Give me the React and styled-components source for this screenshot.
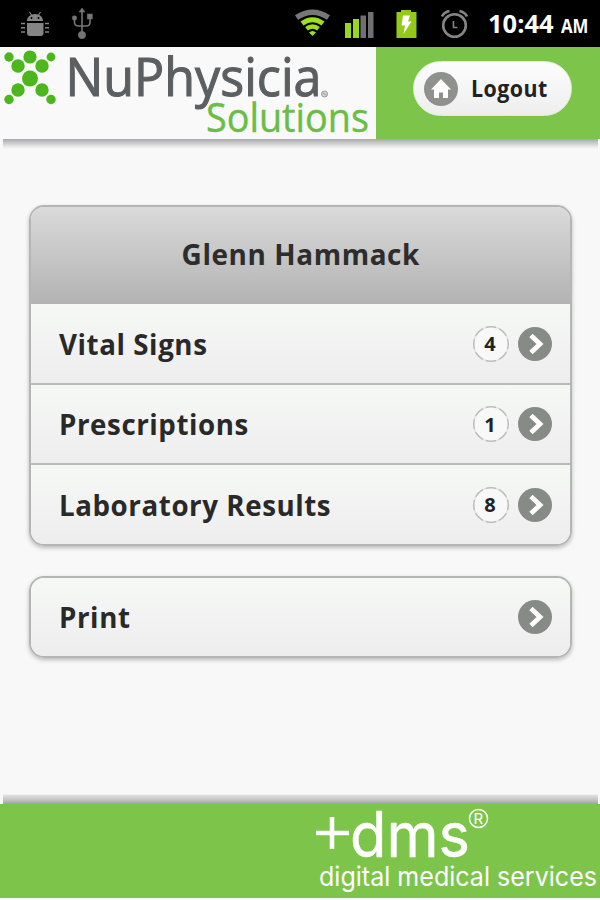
import React from 'react'
import styled, { createGlobalStyle } from 'styled-components';

const GlobalStyle = createGlobalStyle`
  * {
    box-sizing: border-box;
  }
  body {
    margin: 0;
    background-color: #f8f8f8;
    font-family: 'Open Sans', 'Noto Sans', sans-serif;
  }
`;

const Screen = styled.div`
  width: 600px;
  height: 900px;
  display: flex;
  flex-direction: column;
  overflow: hidden;
  background-color: #f8f8f8;
`;

const StatusBar = styled.div`
  height: 47px;
  flex: none;
  display: flex;
  justify-content: space-between;
  background-color: #000;
`;

const Clock = styled.div`
  width: 112px;
  display: flex;
  align-items: baseline;
  color: #fff;
  font-weight: 700;
  line-height: 46px;
`;

const Time = styled.span`
  width: 73px;
  font-size: 25px;
  white-space: nowrap;
`;

const Squeeze = styled.span`
  display: inline-block;
  white-space: nowrap;
  transform: scaleX(${(props) => props.$x || 1});
  transform-origin: ${(props) => props.$origin || 'left'} center;
`;

const Meridiem = styled.span`
  font-size: 20px;
`;

const Header = styled.header`
  height: 92px;
  flex: none;
  display: flex;
  background-color: #7dc54a;
`;

const LogoBox = styled.div`
  width: 376px;
  height: 92px;
  background-color: #f8f9f8;
`;

const HeaderRight = styled.div`
  flex: 1;
  padding: 14px 0 0 37px;
`;

const LogoutButton = styled.button`
  width: 159px;
  height: 55px;
  padding: 0 0 0 10px;
  display: flex;
  align-items: center;
  gap: 13px;
  border: 1px solid #ddeed0;
  border-radius: 28px;
  background: linear-gradient(#fdfdfd, #eeeeee);
  color: #222;
  font: 700 22.5px 'Open Sans', sans-serif;
  letter-spacing: 0.5px;
  cursor: pointer;
`;

const EdgeShadow = styled.div`
  height: 10px;
  flex: none;
  margin: 0 2px 0 3px;
  background: linear-gradient(
    ${(props) => (props.$up ? 'to top, #a2a2a4, #c6c6c7 45%, #dedede 85%' : 'to bottom, #a8a8aa, #cacacb 40%, #e8e8e8 75%')},
    #f8f8f8
  );
`;

const Content = styled.main`
  flex: 1;
  padding: 56px 28px 0 29px;
  display: flex;
  flex-direction: column;
  gap: 30px;
`;

const Card = styled.ul`
  margin: 0;
  padding: 0;
  list-style: none;
  border: 2px solid #b4b6b5;
  border-radius: 15px;
  overflow: hidden;
  box-shadow: 0 2px 4px rgba(0, 0, 0, 0.25);
`;

const CardTitle = styled.li`
  height: 97px;
  padding-bottom: 4px;
  display: flex;
  align-items: center;
  justify-content: center;
  background: linear-gradient(#d9dad9, #b3b3b3);
  color: #2d2d2d;
  font-size: 29px;
  font-weight: 700;
  letter-spacing: 0.6px;
`;

const Row = styled.li`
  height: ${(props) => props.$height || 80}px;
  padding: 0 18px 0 28px;
  display: flex;
  align-items: center;
  background: linear-gradient(#f6f8f6, #ededed);
  color: #292929;
  font-size: 29px;
  font-weight: 700;
  letter-spacing: 0.6px;
  cursor: pointer;

  & + & {
    border-top: 2px solid #b8bab8;
  }
`;

const RowLabel = styled.div`
  flex: 1;
  padding-bottom: 1px;
`;

const Count = styled.div`
  width: 36px;
  height: 36px;
  margin-right: 9px;
  padding-right: 2px;
  display: flex;
  align-items: center;
  justify-content: center;
  border-radius: 50%;
  background: 
    radial-gradient(circle, #f7f8f7 0 16px, transparent 17px),
    repeating-conic-gradient(from -16deg, #b9bcb9 0 32deg, #e2e4e2 34deg 43deg, #b9bcb9 45deg);
  color: #222;
  font-size: 20px;
  letter-spacing: 0;
`;

const Footer = styled.footer`
  height: 94px;
  flex: none;
  margin-bottom: 2px;
  display: flex;
  justify-content: flex-end;
  background-color: #7dc54a;
`;

const dots = [
  [9, 10, 4.7], [30, 10, 6.6], [51, 10, 4.4],
  [18, 19, 6.7], [42, 19, 6.7], [30, 31.5, 8],
  [18, 43, 6.7], [42, 43, 6.7], [9, 52.5, 4.7], [51, 52.5, 4.7],
];

const rows = [
  { label: 'Vital Signs', count: 4, height: 79 },
  { label: 'Prescriptions', count: 1, height: 80 },
  { label: 'Laboratory Results', count: 8, height: 81 },
];

function StatusIcons() {
  return (
    <svg width="488" height="47" viewBox="0 0 488 47">
      {/* debug bug */}
      <g fill="#858585">
        <path d="M27 21c0-4 3.500-7 8-7s8 3 8 7z" />
        <path d="M29.500 12l2 3M40.500 12l-2 3" stroke="#858585" strokeWidth="1.200" />
        <path d="M27 23h16.500v10q0 3-3 3H30q-3 0-3-3z" />
        <path d="M21 23.500h4M21 27.800h4M21 32h4M45 23.500h4M45 27.800h4M45 32h4" stroke="#858585" strokeWidth="1.400" />
        <circle cx="31.500" cy="18" r="1" fill="#000" />
        <circle cx="38.500" cy="18" r="1" fill="#000" />
      </g>
      {/* usb */}
      <g fill="#757575" stroke="#757575">
        <path d="M82 35V10M74.500 18v4q0 4 4 4h7.500q4 0 4-4v-5" fill="none" strokeWidth="1.600" />
        <path d="M82 8l3 4h-6z" strokeWidth=".5" />
        <circle cx="74.500" cy="18" r="2.300" strokeWidth=".5" />
        <rect x="87.300" y="14" width="5" height="5" strokeWidth=".5" />
        <circle cx="82" cy="35" r="3.700" strokeWidth=".5" />
      </g>
      {/* wifi */}
      <g fill="none">
        <path d="M296.500 17.500q16-10.500 32 0" stroke="#777" strokeWidth="5.500" />
        <path d="M302 23.500q10.500-7.500 21 0" stroke="#9be01a" strokeWidth="5" />
        <path d="M306.500 28.800q6-4.500 12 0" stroke="#9be01a" strokeWidth="4.500" />
        <path d="M309 32.500q3.500-3 7 0l-3.500 3.500z" fill="#9be01a" />
      </g>
      {/* signal */}
      <path d="M345 23h6v15h-6zM353 19h6v19h-6z" fill="#99d61c" />
      <path d="M360.500 15.500h5.500V38h-5.500zM368 12h5.500v26H368z" fill="#707070" />
      {/* battery */}
      <path d="M396.500 12h4.500v-2h10v2h5.500v26h-20z" fill="#94c81a" />
      <path d="M403 15.500h7l-2 6h3.500L403.500 34l1.500-8.500h-3.500z" fill="#fff" />
      {/* alarm */}
      <g fill="none" stroke="#858585" strokeWidth="2.600">
        <circle cx="454.500" cy="25.500" r="11.300" />
        <path d="M442 16.500q2-4.500 7.500-5.500M467 16.500q-2-4.500-7.500-5.500" />
        <path d="M453.500 21v6.500h4" strokeWidth="1.600" />
      </g>
    </svg>
  );
}

function CompanyLogo() {
  return (
    <svg width="376" height="92" viewBox="0 0 376 92" fontFamily="'Open Sans', sans-serif">
      {dots.map(([cx, cy, r], i) => (
        <circle key={i} cx={cx} cy={cy} r={r} fill="#4cb71c" />
      ))}
      <text x="65.500" y="48.500" fontSize="53.500" fill="#5c5f61" stroke="#5c5f61" strokeWidth="1.100" textLength="256" lengthAdjust="spacingAndGlyphs">NuPhysicia</text>
      <circle cx="324.500" cy="47" r="3" fill="#d5d5d5" stroke="#999" />
      <path d="M323 45.500l3 3" stroke="#888" />
      <text x="206" y="85" fontSize="41" fill="#6abd45" stroke="#6abd45" strokeWidth=".4" textLength="163" lengthAdjust="spacingAndGlyphs">Solutions</text>
    </svg>
  );
}

function HomeIcon() {
  return (
    <svg width="34" height="34" viewBox="0 0 34 34">
      <circle cx="17" cy="17" r="17" fill="#8f918f" />
      <path d="M17 7L7 17.500h3V26h5v-5.500h4V26h5v-8.500h3z" fill="#fff" />
    </svg>
  );
}

function ArrowIcon() {
  return (
    <svg width="34" height="34" viewBox="0 0 34 34">
      <circle cx="17" cy="17" r="17" fill="#868b87" />
      <path d="M13 8.500l9 8.500-9 8.500" fill="none" stroke="#fff" strokeWidth="4.800" />
    </svg>
  );
}

function DmsLogo() {
  return (
    <svg width="290" height="94" viewBox="310 0 290 94" fill="#fff" fontFamily="Inter, sans-serif">
      <path d="M316 29h33M332 13v32" stroke="#fff" strokeWidth="4.600" />
      <text x="350" y="53" fontSize="63" stroke="#fff" strokeWidth=".5" textLength="120" lengthAdjust="spacingAndGlyphs">dms</text>
      <circle cx="478.500" cy="14.500" r="9" fill="none" stroke="#fff" strokeWidth="1.500" />
      <text x="473.500" y="20" fontSize="15">R</text>
      <text x="319" y="81.500" fontSize="26.500" textLength="278" lengthAdjust="spacingAndGlyphs">digital medical services</text>
    </svg>
  );
}

function App() {
  return (
    <Screen>
      <GlobalStyle />
      <StatusBar>
        <StatusIcons />
        <Clock>
          <Time><Squeeze $x={1.02}>10:44</Squeeze></Time>
          <Meridiem><Squeeze $x={0.84}>AM</Squeeze></Meridiem>
        </Clock>
      </StatusBar>
      <Header>
        <LogoBox>
          <CompanyLogo />
        </LogoBox>
        <HeaderRight>
          <LogoutButton>
            <HomeIcon />
            <Squeeze $x={0.95}>Logout</Squeeze>
          </LogoutButton>
        </HeaderRight>
      </Header>
      <EdgeShadow />
      <Content>
        <Card>
          <CardTitle>
            <Squeeze $x={0.963} $origin="center">Glenn Hammack</Squeeze>
          </CardTitle>
          {rows.map((row) => (
            <Row key={row.label} $height={row.height}>
              <RowLabel>
                <Squeeze $x={0.955}>{row.label}</Squeeze>
              </RowLabel>
              <Count>{row.count}</Count>
              <ArrowIcon />
            </Row>
          ))}
        </Card>
        <Card>
          <Row $height={78}>
            <RowLabel>
              <Squeeze $x={0.955}>Print</Squeeze>
            </RowLabel>
            <ArrowIcon />
          </Row>
        </Card>
      </Content>
      <EdgeShadow $up />
      <Footer>
        <DmsLogo />
      </Footer>
    </Screen>
  );
}

export default App
